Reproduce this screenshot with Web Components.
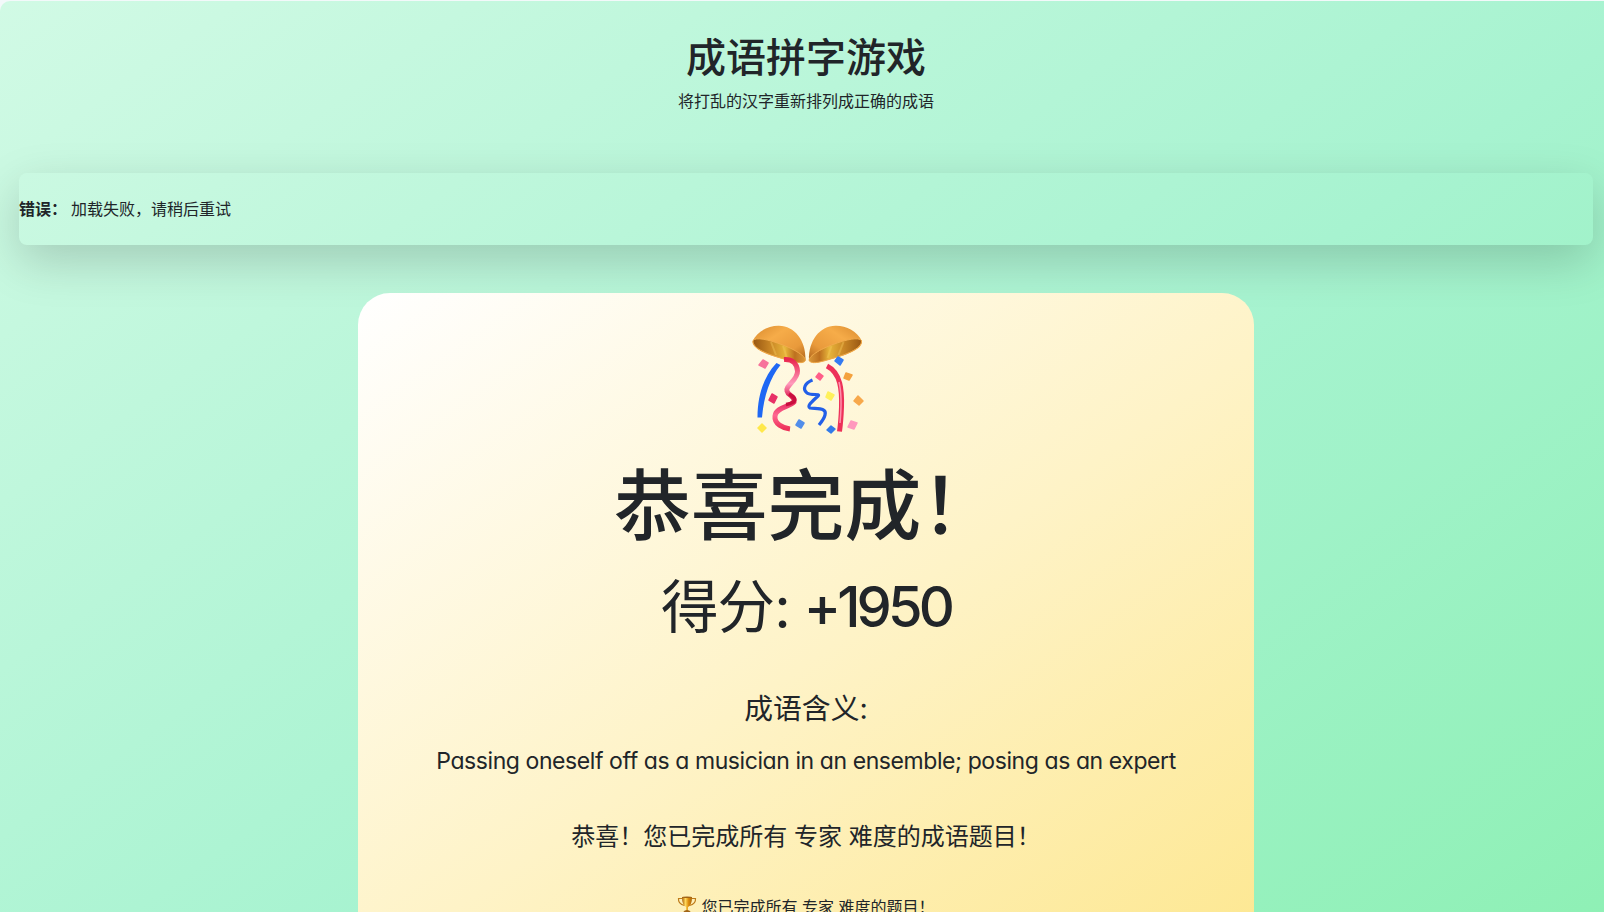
<!DOCTYPE html>
<html lang="zh-CN">
<head>
<meta charset="utf-8">
<title>成语拼字游戏</title>
<style>
html{background:#f3f9fa;overflow:hidden}
body{margin:0;height:912px;overflow:hidden;color:#212529;font:16px/24px Inter,"Noto Sans CJK SC",sans-serif}
</style>
</head>
<body>
<idiom-game>
  <game-header><span slot="title">成语拼字游戏</span>将打乱的汉字重新排列成正确的成语</game-header>
  <game-alert><strong slot="label">错误：</strong>加载失败，请稍后重试</game-alert>
  <result-card>
    <party-ball slot="icon"></party-ball>
    <span slot="heading">恭喜完成！</span>
    <span slot="label">得分:</span><span slot="score">+1950</span>
    <span slot="term">成语含义:</span>
    <span slot="meaning">Passing oneself off as a musician in an ensemble; posing as an expert</span>
    <span slot="message">恭喜！您已完成所有 专家 难度的成语题目！</span>
    <gold-trophy slot="foot"></gold-trophy><span slot="foot">您已完成所有 专家 难度的题目！</span>
  </result-card>
</idiom-game>
<script>
const define=(name,html)=>customElements.define(name,class extends HTMLElement{
  constructor(){super();this.attachShadow({mode:'open'}).innerHTML=html}
});

define('idiom-game',`<style>
:host{display:flex;flex-direction:column;box-sizing:border-box;width:1612px;height:911px;margin-top:1px;padding:32px 19px 0;border-radius:10px 0 0 0;overflow:hidden;background:linear-gradient(145deg,#d1fae5 0%,#a7f3d0 50%,#86efac 100%) 0 0/1612px 1210px no-repeat}
::slotted(*){flex-shrink:0}
</style><slot></slot>`);

define('game-header',`<style>
:host{display:block;height:140px;text-align:center}
h1{margin:0;padding-top:1px;font-size:40px;line-height:48px;font-weight:500}
p{margin:7px 0 0}
</style><h1><slot name="title"></slot></h1><p><slot></slot></p>`);

define('game-alert',`<style>
:host{display:flex;align-items:center;gap:4px;height:72px;border-radius:8px;box-shadow:0 16px 48px rgba(0,0,0,.175)}
</style><slot name="label"></slot><span><slot></slot></span>`);

define('result-card',`<style>
:host{display:block;box-sizing:border-box;position:relative;width:896px;height:740px;margin:48px auto 0;padding-top:31px;border-radius:32px;text-align:center;background:linear-gradient(145deg,#fff 0%,#fef3c7 50%,#fde68a 100%)}
h2{margin:25px 0 0;font-size:76.8px;line-height:92px;font-weight:500}
.score{margin-top:11px;font-size:57.6px;line-height:86px;display:flex;justify-content:center;gap:14px}
.score span:first-child{letter-spacing:-1px}
.num{font-weight:500;font-size:56px;letter-spacing:-3.9px}
.term{margin-top:37px;font-size:28.8px;line-height:43px}
.meaning{margin-top:13px;font-size:23px;line-height:36px;letter-spacing:-.42px;white-space:nowrap;font-feature-settings:"cv11"}
.message{margin-top:40px;font-size:24px;line-height:36px}
.foot{display:flex;justify-content:center;gap:5px;margin-top:40px}
</style>
<slot name="icon"></slot><h2><slot name="heading"></slot></h2>
<div class="score"><span><slot name="label"></slot></span><span class="num"><slot name="score"></slot></span></div>
<div class="term"><slot name="term"></slot></div>
<div class="meaning"><slot name="meaning"></slot></div>
<div class="message"><slot name="message"></slot></div>
<div class="foot"><slot name="foot"></slot></div>`);

define('party-ball',`<style>:host{display:block;width:133px;height:112px;margin:0 auto}svg{display:block;overflow:visible}</style>
<svg width="134" height="112" viewBox="0 8 134 112" fill="none" stroke-linecap="butt">
<defs>
<linearGradient id="o" x1="0" y1="0" x2="1" y2="1"><stop stop-color="#d8892d"/><stop offset=".35" stop-color="#f6ac49"/><stop offset=".7" stop-color="#e99a3b"/><stop offset="1" stop-color="#a96017"/></linearGradient>
<linearGradient id="i" x1="0" x2="1"><stop stop-color="#985712"/><stop offset=".35" stop-color="#cb8826"/><stop offset=".62" stop-color="#e7b53a"/><stop offset=".8" stop-color="#bd701f"/><stop offset="1" stop-color="#d99738"/></linearGradient>
<linearGradient id="p" x1="0" y1="0" x2="0" y2="1"><stop stop-color="#e9264f"/><stop offset=".35" stop-color="#ff9bbd"/><stop offset=".55" stop-color="#dc174c"/><stop offset=".8" stop-color="#ff6791"/><stop offset="1" stop-color="#ed3158"/></linearGradient>
<g id="cup"><path d="M12.500 25.500C17 15 29 9.500 39 9.800 55 10 66 25 65.500 44 64 48 57 47 47 44 31 40 12 34 12.500 25.500Z" fill="url(#o)"/><path d="M13 24.500C16 21 27 23 43 29 58 35 66 41 65.300 44.500 64 48 56 47 44 43 30 39 12 33 13 24.500Z" fill="url(#i)" stroke="#f1ab4c" stroke-width="1"/><path d="M31 26 36 39M43 30 47 42" stroke="#f5c75c" stroke-width="2" opacity=".4"/></g>
</defs>
<use href="#cup"/><use href="#cup" transform="matrix(-1 0 0 1 134.500 0)"/>
<path d="M36.500 47 40.500 49C30 62 24 79 22 101.500H17.500C17.500 79 24 60 36.500 47Z" fill="#1f68f4"/>
<path d="M44 43.500C52 43 57 47 57.500 55 58 64 45 70 47 75 48 80 56 80 54 86 50 91 36 91 35 100 34 108 43 112 50 113" stroke="url(#p)" stroke-width="5"/>
<path d="M49 78Q57 82 53.500 86 50 88 46 88.500" stroke="#c90e3e" stroke-width="3.500"/>
<path d="M87 50C101 57 102 75 101.500 91Q101 105 99.500 115.500" stroke="#ed3159" stroke-width="5"/><path d="M99 66Q102.500 80 100 107" stroke="#ff91ad" stroke-width="1.500"/>
<path d="M72.500 64C65 67 62 73 67 77 71 80 81 77 78 80 74 84 66 90 70 92 79 93 87 92 85 99Q84 103 79 109" stroke="#225fe8" stroke-width="3.200"/>
<g stroke-width="1.500" stroke-linejoin="round">
<path d="M23 44 28 47 25 52 19 49Z" fill="#f7739b" stroke="#f7739b"/><path d="M32 78 37 81 34 87 29 84Z" fill="#e83166" stroke="#e83166"/><path d="M79 57 83 60 80 64 76 61Z" fill="#ff5d89" stroke="#ff5d89"/>
<path d="M98 41 103 44 100 49 95 45Z" fill="#347bf1" stroke="#347bf1"/><path d="M106 57 112 59 109 64 104 62Z" fill="#f4a23e" stroke="#f4a23e"/><path d="M118 80 123 85 119 89 114 85Z" fill="#f7a84b" stroke="#f7a84b"/>
<path d="M88 76 94 79 91 84 86 81Z" fill="#fff15b" stroke="#fff15b"/><path d="M22 108 26 112 22 116 18 112Z" fill="#ffe84b" stroke="#ffe84b"/><path d="M59 104 64 107 61 112 56 109Z" fill="#528eea" stroke="#528eea"/>
<path d="M91 110 95 113 91 117 87 114Z" fill="#327be9" stroke="#327be9"/><path d="M111 105 117 107 114 113 108 111Z" fill="#ff98bd" stroke="#ff98bd"/>
</g></svg>`);

define('gold-trophy',`<style>:host{display:block;width:19px;height:24px}svg{display:block;overflow:visible}</style>
<svg width="19" height="20" viewBox="-.5 -1 19 20"><defs><linearGradient id="g"><stop stop-color="#a65c08"/><stop offset=".35" stop-color="#ffd85b"/><stop offset=".65" stop-color="#dc8c0b"/><stop offset="1" stop-color="#a9650a"/></linearGradient></defs>
<path d="M5 2.500H1Q.5 8 7 9.500M14 2.500H18Q18.500 8 12 9.500" fill="none" stroke="#be7b19" stroke-width="1.200"/><path d="M4.500 1H14.500Q14.500 9 10.500 11V15H8.500V11Q4.500 9 4.500 1Z" fill="url(#g)"/><ellipse cx="9.500" cy="1.200" rx="5" ry=".8" fill="#a16416"/><path d="M5 18Q6 14 9.500 14T14 18Z" fill="#a16416"/></svg>`);
</script>
</body>
</html>
